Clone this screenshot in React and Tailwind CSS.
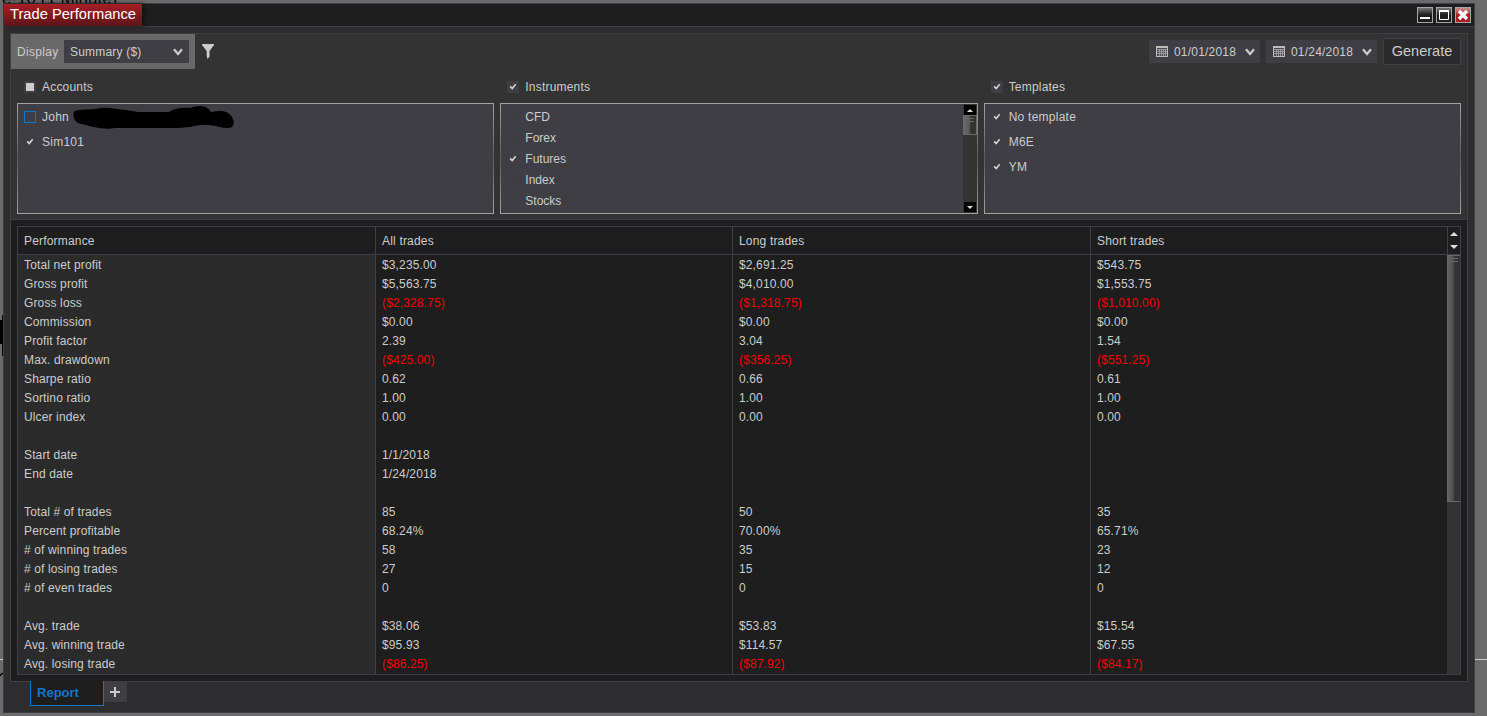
const accounts = [
  { name: 'John', focused: true },
  { name: 'Sim101', checked: true },
];

const instruments = [
  { name: 'CFD' },
  { name: 'Forex' },
  { name: 'Futures', checked: true },
  { name: 'Index' },
  { name: 'Stocks' },
];

const templates = [
  { name: 'No template', checked: true },
  { name: 'M6E', checked: true },
  { name: 'YM', checked: true },
];

const columns = [
  { title: 'Performance', style: 'w-[358px] border-r bg-[#2b2b2b]' },
  { title: 'All trades', style: 'w-[357px] border-r' },
  { title: 'Long trades', style: 'w-[358px] border-r' },
  { title: 'Short trades', style: 'w-[356px]' },
];

const rows = [
  ['Total net profit', '$3,235.00', '$2,691.25', '$543.75'],
  ['Gross profit', '$5,563.75', '$4,010.00', '$1,553.75'],
  ['Gross loss', '($2,328.75)', '($1,318.75)', '($1,010.00)'],
  ['Commission', '$0.00', '$0.00', '$0.00'],
  ['Profit factor', '2.39', '3.04', '1.54'],
  ['Max. drawdown', '($425.00)', '($356.25)', '($551.25)'],
  ['Sharpe ratio', '0.62', '0.66', '0.61'],
  ['Sortino ratio', '1.00', '1.00', '1.00'],
  ['Ulcer index', '0.00', '0.00', '0.00'],
  ['', '', '', ''],
  ['Start date', '1/1/2018', '', ''],
  ['End date', '1/24/2018', '', ''],
  ['', '', '', ''],
  ['Total # of trades', '85', '50', '35'],
  ['Percent profitable', '68.24%', '70.00%', '65.71%'],
  ['# of winning trades', '58', '35', '23'],
  ['# of losing trades', '27', '15', '12'],
  ['# of even trades', '0', '0', '0'],
  ['', '', '', ''],
  ['Avg. trade', '$38.06', '$53.83', '$15.54'],
  ['Avg. winning trade', '$95.93', '$114.57', '$67.55'],
  ['Avg. losing trade', '($86.25)', '($87.92)', '($84.17)'],
];

function Chevron() {
  return (
    <svg viewBox="0 0 10 8" className="h-2 w-[10px]" fill="none" stroke="#cccccc" strokeWidth="2.2">
      <path d="M1 1.2 5 6 9 1.2" />
    </svg>
  );
}

function Triangle({ up, className }) {
  return (
    <svg viewBox="0 0 8 4" className={className} fill="#dddddd">
      <path d={up ? 'M0 4 4 0 8 4z' : 'M0 0h8L4 4z'} />
    </svg>
  );
}

function Checkbox({ checked, partial, focused, header }) {
  return (
    <span
      className={`flex size-3 shrink-0 items-center justify-center border ${
        focused ? 'border-[#1177c6]' : header ? 'border-[#3f3e45] bg-[#3f3e45]' : 'border-[#3c3c41]'
      }`}
    >
      {partial && <span className="size-2 shrink-0 bg-[#cccccc]" />}
      {checked && (
        <svg viewBox="0 0 8 8" className="size-2 shrink-0" fill="none" stroke="#d4d4d4" strokeWidth="1.6">
          <path d="M1.2 3.4 3.2 5.6 6.7 1.2" />
        </svg>
      )}
    </span>
  );
}

function ArrowBox({ up }) {
  return (
    <span className={`ml-px flex h-[10px] w-3 items-center justify-center bg-black ${up ? '' : 'mb-px'}`}>
      <Triangle up={up} className="h-[3px] w-[6px]" />
    </span>
  );
}

function ListBox({ title, partial, items, tall, scroll, children }) {
  return (
    <section className="relative flex-1">
      <div className="flex h-[17px] items-center gap-[6px] pl-[7px]">
        <Checkbox header partial={partial} checked={!partial} />
        <span className="tracking-[0.2px]">{title}</span>
      </div>
      <div className="mt-2 flex h-[111px] bg-linear-to-b from-[#a3a3a6] via-[#5c5c5e] to-[#a3a3a6] p-px">
        <ul className="flex-1 bg-[#3f3e45] pt-[3px]">
          {items.map((item) => (
            <li
              key={item.name}
              className={`flex items-center gap-[6px] pl-[6px] ${tall ? 'h-[25px] pb-[6px]' : 'h-[21px] pb-px'}`}
            >
              <Checkbox checked={item.checked} focused={item.focused} />
              <span className={tall ? 'tracking-[0.25px]' : ''}>{item.name}</span>
            </li>
          ))}
        </ul>
        {scroll && (
          <div className="flex w-[14px] flex-col bg-[#333333] pt-px">
            <ArrowBox up />
            <div className="flex h-5 w-[14px] flex-col items-end gap-[2px] border border-[#696969] bg-linear-to-r from-[#696969] from-5% via-[#555555] via-50% to-[#333333] to-55% pt-[2px] pr-[2px]">
              <span className="h-px w-2 bg-[#696969]" />
              <span className="h-px w-2 bg-[#696969]" />
            </div>
            <span className="flex-1" />
            <ArrowBox />
          </div>
        )}
      </div>
      {children}
    </section>
  );
}

function CalendarIcon() {
  return (
    <svg viewBox="0 0 12 11" className="h-[11px] w-3">
      <rect width="12" height="11" fill="#c0bab8" />
      <rect x="1" y="2" width="10" height="8" fill="#4b4a52" />
      <path d="M3.5 3v7M5.5 3v7M7.5 3v7M9.5 3v7M1 3.5h10M1 5.5h10M1 7.5h10" stroke="#b3afb2" strokeWidth="0.7" />
    </svg>
  );
}

function DateField({ value }) {
  return (
    <div className="flex h-[23px] w-[111px] items-center bg-[#3f3e45] pl-[7px]">
      <CalendarIcon />
      <span className="ml-[6px] w-[71px] tracking-[0.2px]">{value}</span>
      <Chevron />
    </div>
  );
}

function WindowButton({ danger, children }) {
  return (
    <button
      className={`flex size-4 items-center justify-center border border-[#a5a5a5] ${
        danger
          ? 'bg-linear-to-b from-[#c98a8c] via-[#a91d22] to-[#a91d22]'
          : 'bg-linear-to-b from-[#777777] via-[#1e1e1e] to-[#1e1e1e]'
      }`}
    >
      <svg viewBox="0 0 14 14" className="size-[14px] shrink-0" fill="none" stroke="#ffffff">
        {children}
      </svg>
    </button>
  );
}

function TitleBar() {
  return (
    <header className="flex h-[23px] justify-between border-b border-[#3f3f43] bg-[#1e1e1e]">
      <h1 className="flex h-[22px] w-[138px] items-center bg-linear-to-b from-[#a91d24] to-[#5c1519] pl-[6px] text-[14.7px] text-white shadow-[2px_0_4px_#111]">
        Trade Performance
      </h1>
      <div className="flex gap-[3px] pt-[3px] pr-[3px]">
        <WindowButton>
          <path d="M2 10h10" strokeWidth="2" />
        </WindowButton>
        <WindowButton>
          <path d="M2.5 3v8.5h9V3" />
          <path d="M2 3h10" strokeWidth="2" />
        </WindowButton>
        <WindowButton danger>
          <path d="m3 3 8 8M11 3l-8 8" strokeWidth="3.4" />
        </WindowButton>
      </div>
    </header>
  );
}

function Toolbar() {
  return (
    <div className="flex h-[35px] justify-between">
      <div className="flex">
        <div className="flex w-[184px] items-center bg-[#696969] pl-[6px]">
          <span className="w-[47px] tracking-[0.3px]">Display</span>
          <div className="flex h-[23px] w-[125px] items-center justify-between bg-[#3f3e45] pr-[6px] pl-[6px]">
            <span className="tracking-[0.2px]">Summary ($)</span>
            <Chevron />
          </div>
        </div>
        <svg viewBox="0 0 12 15" className="mt-[10px] ml-[7px] h-[15px] w-3" fill="#cccccc">
          <path d="M0 0h12v1L7.5 7v5.5L5.5 15 4.7 12V7L0 1z" />
        </svg>
      </div>
      <div className="flex items-center gap-[6px] pr-[6px]">
        <DateField value="01/01/2018" />
        <DateField value="01/24/2018" />
        <button className="h-[27px] w-[78px] border border-[#3f3f43] bg-[#2b2b2d] text-[14.5px]">Generate</button>
      </div>
    </div>
  );
}

function ReportTable() {
  return (
    <div className="mx-[6px] mt-[6px] flex h-[449px] border border-[#3f3f43]">
      {columns.map((column, index) => (
        <div key={column.title} className={`flex flex-col border-[#3f3f43] ${column.style}`}>
          <div className="flex h-7 items-center border-b border-[#3f3f43] bg-[#1e1e1e] pl-[6px] tracking-[0.18px]">
            {column.title}
          </div>
          <div className="pt-px tracking-[0.13px]">
            {rows.map((row, i) => (
              <div
                key={i}
                className={`h-[19px] pl-[6px] leading-[19px] ${row[index].startsWith('(') ? 'text-[#f40000]' : ''}`}
              >
                {row[index]}
              </div>
            ))}
          </div>
        </div>
      ))}
      <div className="flex flex-1 flex-col bg-[#333333]">
        <div className="flex h-7 flex-col items-center justify-between border-b border-l border-[#3f3f43] bg-[#1e1e1e] py-[5px]">
          <Triangle up className="h-1 w-2" />
          <Triangle className="h-1 w-2" />
        </div>
        <div className="flex h-[247px] flex-col items-end gap-[2px] border-y border-[#696969] bg-linear-to-r from-[#696969] via-[#4c4c4c] via-50% to-[#333333] to-55% pt-[2px] pr-[2px]">
          <span className="h-px w-2 bg-[#696969]" />
          <span className="h-px w-2 bg-[#696969]" />
        </div>
      </div>
    </div>
  );
}

export default function App() {
  return (
    <div className="relative h-[716px] w-[1487px] overflow-hidden bg-[#6b6b6b] pt-[3px] pl-[3px] font-['Liberation_Sans',Arial,sans-serif] text-xs text-[#cccccc]">
      {/* chart window showing around the edges */}
      <span className="absolute -top-[10px] left-[2px] text-[17px] leading-[18px] text-black">e-10 (1 Minute)</span>
      <span className="absolute top-[315px] left-0 h-[41px] w-[3px] border-r border-black" />
      <span className="absolute top-[320px] left-0 h-6 w-[3px] bg-black" />
      <span className="absolute top-[659px] left-0 h-px w-full bg-[#cccccc]" />
      <svg viewBox="0 0 3 5" className="absolute top-[672px] left-0 h-[5px] w-[3px]" fill="none" stroke="#000000" strokeWidth="1.5">
        <path d="M0 4 1 2.5 3 1" />
      </svg>

      <main className="relative h-[710px] w-[1472px] border border-[#3f3f43] bg-[#2d2d30]">
        <TitleBar />
        <div className="mt-[6px] ml-[6px] h-[649px] w-[1458px] border border-[#3f3f43] bg-[#1e1e1e]">
          <div className="h-[186px] border-b border-[#3f3f43] bg-[#333333]">
            <Toolbar />
            <div className="flex gap-[6px] px-[6px] pt-[9px]">
              <ListBox title="Accounts" partial items={accounts} tall>
                <svg viewBox="0 0 162 24" className="absolute top-[27px] left-[56px] h-6 w-[162px]">
                  <path
                    d="M1 7C3 4 12 5 22 4 33 1 42 4 53 5l12 2h31c4-3 12-5 22-4 6-3 16-3 20 4 6-1 12-2 17 1 5 3 7 9 5 13-3 3-8 2-13 1-12-3-22-2-30 0-8 1-15 1-23 1H42c-12 2-22-1-33-4C2 18-1 12 1 7z"
                    fill="#000000"
                  />
                </svg>
              </ListBox>
              <ListBox title="Instruments" items={instruments} scroll />
              <ListBox title="Templates" items={templates} tall />
            </div>
          </div>
          <ReportTable />
        </div>
        <footer className="relative -mt-px flex pl-[26px]">
          <button className="h-[25px] w-[74px] border border-t-0 border-[#1177c6] bg-[#1e1e1e] pr-[18px] text-[13px] font-bold text-[#1177c6]">
            Report
          </button>
          <button className="mt-px flex h-5 w-[23px] items-center bg-[#3f3e45] pl-[6px]">
            <svg viewBox="0 0 10 10" className="size-[10px]" stroke="#cccccc" strokeWidth="2">
              <path d="M5 0v10M0 5h10" />
            </svg>
          </button>
        </footer>
      </main>
    </div>
  );
}
